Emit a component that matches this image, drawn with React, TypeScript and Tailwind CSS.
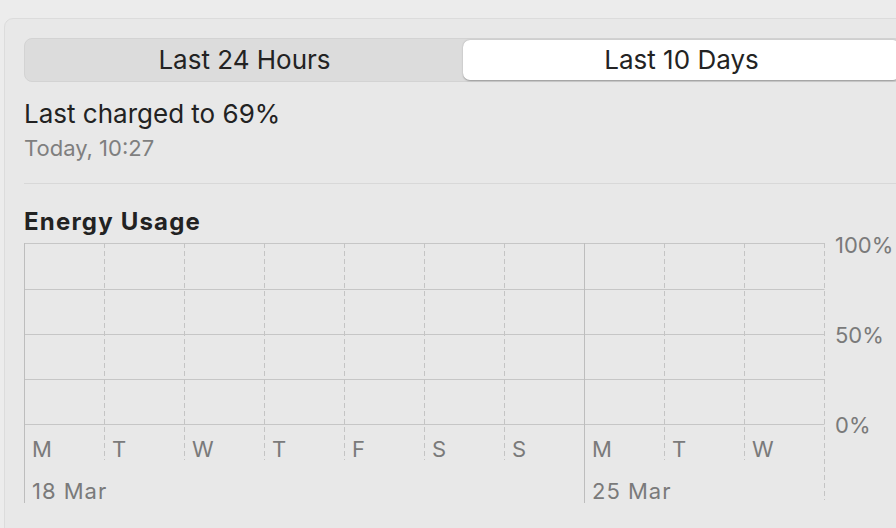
import React from "react";

const days = ["M", "T", "W", "T", "F", "S", "S", "M", "T", "W"];

// chart lines are drawn in svg, labels stay text
function ChartLines() {
  const rows = [0, 46, 91, 136, 181];
  const cols = [80, 160, 240, 320, 400, 480, 640, 720];
  return (
    <svg
      className="absolute inset-0"
      width={802}
      height={262}
      viewBox="0 0 802 262"
    >
      {rows.map((y) => (
        <line
          key={y}
          x1={0}
          x2={800.5}
          y1={y + 0.5}
          y2={y + 0.5}
          stroke="#c6c6c6"
          strokeWidth={1}
        />
      ))}
      {cols.map((x) => (
        <line
          key={x}
          x1={x + 0.5}
          x2={x + 0.5}
          y1={0}
          y2={217}
          stroke="#c4c4c4"
          strokeWidth={1}
          strokeDasharray="5 3"
        />
      ))}
      <line x1={800.5} x2={800.5} y1={0} y2={257} stroke="#c4c4c4" strokeDasharray="5 3" />
      <line x1={0.5} x2={0.5} y1={0} y2={260} stroke="#bdbdbd" />
      <line x1={560.5} x2={560.5} y1={0} y2={260} stroke="#bdbdbd" />
    </svg>
  );
}

export default function App() {
  return (
    <div className="w-[896px] h-[528px] overflow-hidden bg-[#ececec] pt-[18px] pl-[4px] font-['Inter',sans-serif] antialiased">
      <div className="w-[930px] h-[540px] bg-[#e8e8e8] border border-[#dcdcdc] rounded-[9px] pt-[19px] pl-[19px]">
        {/* Segmented control */}
        <div className="flex w-[878px] h-[44px] rounded-[8px] bg-[#dcdcdc] border border-[#d3d3d3] p-px text-[26px] leading-[30px] text-[#232323]">
          <div className="flex-1 flex items-center justify-center">
            Last 24 Hours
          </div>
          <div className="flex-1 flex items-center justify-center bg-white rounded-[7px] shadow-[0_0.5px_1.5px_rgba(0,0,0,0.3)]">
            Last 10 Days
          </div>
        </div>

        {/* Last charge */}
        <div className="mt-[17px] text-[26px] leading-[30px] text-[#222]">
          Last charged to 69%
        </div>
        <div className="mt-[7px] text-[22px] leading-[25px] text-[#7f7f7f]">
          Today, 10:27
        </div>

        <div className="mt-[22px] w-[900px] border-t border-[#d8d8d8]" />

        {/* Energy usage */}
        <div className="mt-[25px] text-[24px] leading-[26px] font-bold tracking-[1.2px] text-[#222]">
          Energy Usage
        </div>

        <div className="mt-[8px] flex">
          <div className="relative w-[800px] h-[262px]">
            <ChartLines />
            <div className="relative grid grid-cols-10 pt-[194px] text-[22px] leading-[25px] text-[#7a7a7a]">
              {days.map((d, i) => (
                <div key={i} className="pl-2">
                  {d}
                </div>
              ))}
            </div>
            <div className="relative grid grid-cols-10 mt-[17px] text-[22px] leading-[25px] tracking-[1px] text-[#7a7a7a]">
              <div className="col-span-7 pl-2">18 Mar</div>
              <div className="col-span-3 pl-2">25 Mar</div>
            </div>
          </div>
          <div className="ml-[11px] -mt-[10px] flex flex-col gap-[65px] text-[22px] leading-[25px] text-[#7a7a7a]">
            <div>100%</div>
            <div>50%</div>
            <div>0%</div>
          </div>
        </div>
      </div>
    </div>
  );
}
